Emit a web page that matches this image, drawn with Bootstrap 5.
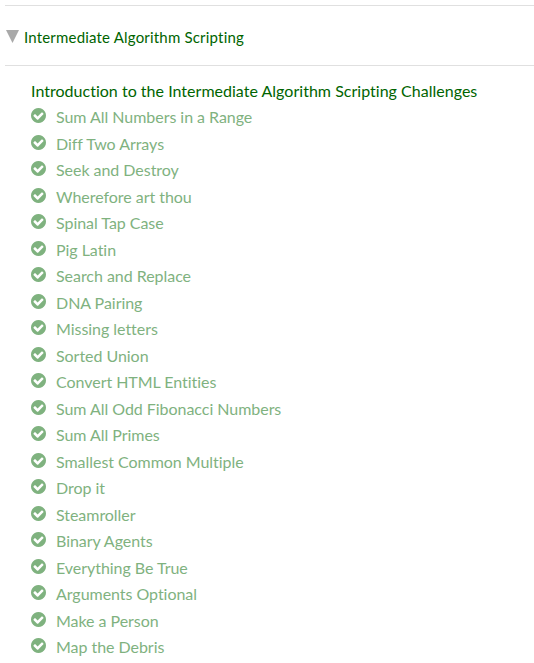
<!DOCTYPE html>
<html lang="en"><head><meta charset="utf-8"><title>Intermediate Algorithm Scripting</title>
<link href="https://cdn.jsdelivr.net/npm/bootstrap@5.3.0/dist/css/bootstrap.min.css" rel="stylesheet">
<style>
body{font-family:Lato,sans-serif;font-size:16px;color:#006400;background:#fff;overflow:hidden;font-variant-ligatures:none}
.map{margin-left:5px;padding-top:5px}
.block-head{height:61px;border-top:1px solid #e0e0e0;border-bottom:1px solid #e0e0e0;padding-top:4px}
.block-head svg{margin:-3px 5px 0 1px}
.block-title{font-size:15px;letter-spacing:.19px}
.lessons{padding:11.6px 0 0 26px;letter-spacing:.02px}
.lessons li{height:26.5px;line-height:26.5px;white-space:nowrap}
.lessons .done{color:#7fb27f;letter-spacing:-.04px}
.done svg{width:15px;height:15px;margin:-3.3px 10px 0 0}
</style>
<script src="https://cdn.jsdelivr.net/npm/bootstrap@5.3.0/dist/js/bootstrap.bundle.min.js"></script>
</head><body>
<svg class="d-none"><symbol id="check" viewBox="0 0 1536 1536"><path fill="currentColor" d="M1284 606q0-28-18-46l-91-90q-19-19-45-19t-45 19L677 877 451 651q-19-19-45-19t-45 19l-91 90q-18 18-18 46 0 27 18 45l362 362q19 19 45 19 27 0 46-19l543-543q18-18 18-45zm252 162q0 209-103 385.500T1153.500 1433 768 1536t-385.500-103T103 1153.500 0 768t103-385.500T382.500 103 768 0t385.500 103T1433 382.500 1536 768z"/></symbol></svg>
<main class="map">
<div class="block-head d-flex align-items-center"><svg width="13" height="13"><path fill="#a9a9a9" d="M0 0h13L6.500 13z"/></svg><span class="block-title">Intermediate Algorithm Scripting</span></div>
<ul class="lessons list-unstyled mb-0"><li>Introduction to the Intermediate Algorithm Scripting Challenges</li>
<li class="done d-flex align-items-center"><svg><use href="#check"/></svg>Sum All Numbers in a Range</li>
<li class="done d-flex align-items-center"><svg><use href="#check"/></svg>Diff Two Arrays</li>
<li class="done d-flex align-items-center"><svg><use href="#check"/></svg>Seek and Destroy</li>
<li class="done d-flex align-items-center"><svg><use href="#check"/></svg>Wherefore art thou</li>
<li class="done d-flex align-items-center"><svg><use href="#check"/></svg>Spinal Tap Case</li>
<li class="done d-flex align-items-center"><svg><use href="#check"/></svg>Pig Latin</li>
<li class="done d-flex align-items-center"><svg><use href="#check"/></svg>Search and Replace</li>
<li class="done d-flex align-items-center"><svg><use href="#check"/></svg>DNA Pairing</li>
<li class="done d-flex align-items-center"><svg><use href="#check"/></svg>Missing letters</li>
<li class="done d-flex align-items-center"><svg><use href="#check"/></svg>Sorted Union</li>
<li class="done d-flex align-items-center"><svg><use href="#check"/></svg>Convert HTML Entities</li>
<li class="done d-flex align-items-center"><svg><use href="#check"/></svg>Sum All Odd Fibonacci Numbers</li>
<li class="done d-flex align-items-center"><svg><use href="#check"/></svg>Sum All Primes</li>
<li class="done d-flex align-items-center"><svg><use href="#check"/></svg>Smallest Common Multiple</li>
<li class="done d-flex align-items-center"><svg><use href="#check"/></svg>Drop it</li>
<li class="done d-flex align-items-center"><svg><use href="#check"/></svg>Steamroller</li>
<li class="done d-flex align-items-center"><svg><use href="#check"/></svg>Binary Agents</li>
<li class="done d-flex align-items-center"><svg><use href="#check"/></svg>Everything Be True</li>
<li class="done d-flex align-items-center"><svg><use href="#check"/></svg>Arguments Optional</li>
<li class="done d-flex align-items-center"><svg><use href="#check"/></svg>Make a Person</li>
<li class="done d-flex align-items-center"><svg><use href="#check"/></svg>Map the Debris</li>
</ul></main></body></html>
